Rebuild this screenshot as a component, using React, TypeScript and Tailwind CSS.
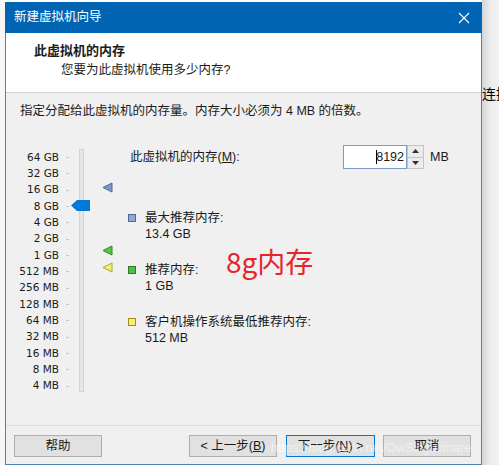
import React from "react";

const sizes = [
  "64 GB",
  "32 GB",
  "16 GB",
  "8 GB",
  "4 GB",
  "2 GB",
  "1 GB",
  "512 MB",
  "256 MB",
  "128 MB",
  "64 MB",
  "32 MB",
  "16 MB",
  "8 MB",
  "4 MB",
];

const Marker: React.FC<{ fill: string; stroke: string; top: string }> = ({ fill, stroke, top }) => (
  <svg className={`absolute left-[88px] ${top}`} width="11" height="11" viewBox="0 0 11 11">
    <polygon points="1,5.5 10,1 10,10" fill={fill} stroke={stroke} strokeWidth="1" strokeLinejoin="round" />
  </svg>
);

const Legend: React.FC<{ color: string; label: string; value: string }> = ({ color, label, value }) => (
  <div className="flex">
    <div className="w-[17px] h-[16px] flex items-center">
      <div className={`w-[8px] h-[8px] border ${color}`} />
    </div>
    <div className="flex flex-col leading-[16px]">
      <span>{label}</span>
      <span>{value}</span>
    </div>
  </div>
);

const Button: React.FC<{ label: React.ReactNode; focused?: boolean; w?: string }> = ({ label, focused, w }) => (
  <div
    className={`${w ?? "w-[88px]"} h-[22px] flex items-center justify-center bg-[#e1e1e1] border ${
      focused ? "border-[#0078d7]" : "border-[#adadad]"
    }`}
  >
    {label}
  </div>
);

const App: React.FC = () => {
  return (
    <div className="w-[499px] h-[465px] flex bg-white overflow-hidden font-['Liberation_Sans','Noto_Sans_CJK_SC',sans-serif] text-[12.5px] text-[#1a1a1a]">
      <div className="w-[5px] shrink-0 bg-[#f7f7f7]" />
      <div className="w-[477px] shrink-0 flex flex-col pt-[2px]">
        <div className="h-[31px] bg-[#0064b3] flex items-center justify-between pl-[9px] pr-[12px] text-white">
          <span className="text-[12.5px]">新建虚拟机向导</span>
          <svg width="12" height="12" viewBox="0 0 12 12">
            <path d="M1 1 L11 11 M11 1 L1 11" stroke="white" strokeWidth="1.1" />
          </svg>
        </div>
        <div className="flex flex-col flex-1 border-l border-r border-b border-[#4f7fb5]">
          <div className="h-[60px] bg-white border-b border-[#d2d2d2] pl-[28px] pt-[9px]">
            <div className="font-bold text-[13px] leading-[17px]">此虚拟机的内存</div>
            <div className="pl-[27px] mt-[3px] leading-[16px]">您要为此虚拟机使用多少内存?</div>
          </div>
          <div className="flex-1 bg-[#f0f0f0] border-b border-[#dcdcdc] flex flex-col">
            <div className="pl-[14px] pt-[10px] leading-[16px]">
              指定分配给此虚拟机的内存量。内存大小必须为 4 MB 的倍数。
            </div>
            <div className="flex mt-[26px]">
              <div className="relative ml-[8px] w-[114px] pt-[4.5px] font-['DejaVu_Sans','Noto_Sans_CJK_SC',sans-serif] text-[10.5px]">
                {sizes.map((s) => (
                  <div key={s} className="h-[16.33px] flex items-center">
                    <span className="w-[45px] text-right whitespace-nowrap">{s}</span>
                    <span className="ml-[7px] w-[3px] h-px bg-[#c8c8c8]" />
                  </div>
                ))}
                <div className="absolute left-[65px] top-[4px] w-[5px] h-[243px] bg-[#e6e6e6] border border-[#d4d4d4]" />
                <svg className="absolute left-[57px] top-[55px]" width="19" height="11" viewBox="0 0 19 11">
                  <polygon points="0,5.5 6,0 19,0 19,11 6,11" fill="#0078d7" />
                </svg>
                <Marker fill="#7d99c8" stroke="#4d6896" top="top-[37px]" />
                <Marker fill="#5cc24c" stroke="#2c8a22" top="top-[100px]" />
                <Marker fill="#f3ef7a" stroke="#b3a21c" top="top-[117px]" />
              </div>
              <div className="relative flex flex-col">
                <div className="h-[24px] flex items-center">
                  <span className="w-[215px] pl-[2px]">
                    此虚拟机的内存(<span className="underline">M</span>):
                  </span>
                  <div className="w-[64px] h-[24px] bg-white border border-[#7a9cc6] flex items-center justify-end pr-[2px]">
                    <span className="w-px h-[14px] bg-black mr-[-1px]" />
                    <span>8192</span>
                  </div>
                  <div className="w-[17px] h-[24px] flex flex-col border border-[#c5c5c5] bg-[#ececec]">
                    <div className="flex-1 flex items-center justify-center border-b border-[#c5c5c5]">
                      <svg width="7" height="4" viewBox="0 0 7 4">
                        <polygon points="0,4 3.5,0 7,4" fill="#333" />
                      </svg>
                    </div>
                    <div className="flex-1 flex items-center justify-center">
                      <svg width="7" height="4" viewBox="0 0 7 4">
                        <polygon points="0,0 3.5,4 7,0" fill="#333" />
                      </svg>
                    </div>
                  </div>
                  <span className="ml-[6px]">MB</span>
                </div>
                <div className="flex flex-col gap-[20px] mt-[41px]">
                  <Legend color="bg-[#8ea8d2] border-[#4d6a9a]" label="最大推荐内存:" value="13.4 GB" />
                  <Legend color="bg-[#4fbf3f] border-[#2a7a20]" label="推荐内存:" value="1 GB" />
                  <Legend color="bg-[#f6ef72] border-[#a08f20]" label="客户机操作系统最低推荐内存:" value="512 MB" />
                </div>
                <div className="absolute left-[98px] top-[100px] text-[28px] leading-[32px] text-[#e5262b] font-['Noto_Sans_CJK_SC',sans-serif]">
                  8g内存
                </div>
              </div>
            </div>
          </div>
          <div className="relative h-[38px] bg-[#f0f0f0] flex items-start pt-[9px] pl-[8px]">
            <Button label="帮助" />
            <div className="ml-[87px]">
              <Button label={<span>&lt; 上一步(<span className="underline">B</span>)</span>} />
            </div>
            <div className="ml-[9px]">
              <Button w="w-[89px]" focused label={<span>下一步(<span className="underline">N</span>) &gt;</span>} />
            </div>
            <div className="ml-[8px]">
              <Button label="取消" />
            </div>
            <div className="absolute left-[265px] top-[13px] text-[12.5px] text-white/50 whitespace-nowrap">
              https://blog.csdn.net/OwSingulimare
            </div>
          </div>
        </div>
      </div>
      <div className="flex-1 min-w-0 overflow-hidden flex flex-col bg-gradient-to-r from-[#d6d6d6] via-[#ececec] to-[#f2f2f2]">
        <div className="h-[45px]" />
        <div className="mt-[39px] text-[14px] leading-[18px] whitespace-nowrap font-['Noto_Sans_CJK_SC',sans-serif] text-black">
          连接
        </div>
      </div>
    </div>
  );
};

export default App;
